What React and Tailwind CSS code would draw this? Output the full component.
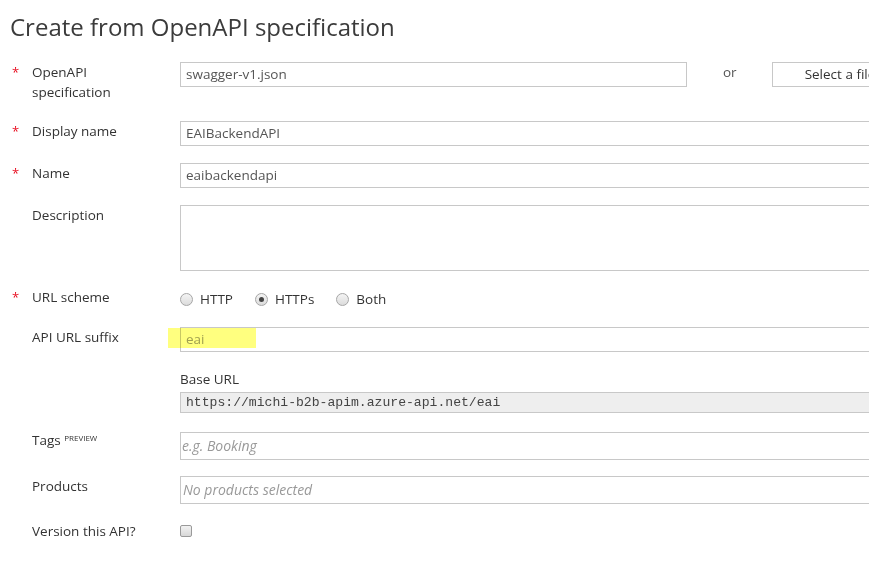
import React from 'react';

const sans = { fontFamily: '"Open Sans", "Liberation Sans", sans-serif' };

function Req({ on }) {
  return (
    <span className="w-[20px] shrink-0 text-[13px] leading-5 text-[#e81123]">
      {on ? '*' : ''}
    </span>
  );
}

function Label({ required, children }) {
  return (
    <div className="flex w-[180px] shrink-0 pl-[12px] text-[13.5px] leading-5 text-[#333]">
      <Req on={required} />
      <div className="w-[140px]">{children}</div>
    </div>
  );
}

function Radio({ checked, label }) {
  return (
    <label className="flex items-center gap-[7px] mr-[22px]">
      <span className="flex h-[13px] w-[13px] items-center justify-center rounded-full border border-[#a6a6a6] bg-gradient-to-b from-[#f4f4f4] to-[#dcdcdc]">
        {checked && <span className="h-[5px] w-[5px] rounded-full bg-[#444]" />}
      </span>
      <span>{label}</span>
    </label>
  );
}

export default function App() {
  return (
    <div className="w-[869px] h-[578px] overflow-hidden bg-white" style={sans}>
      <h1 className="pl-[10px] pt-[11px] text-[24px] leading-8 font-normal text-[#3b3b3b]">
        Create from OpenAPI specification
      </h1>

      <div className="w-[1000px]">
        {/* OpenAPI spec */}
        <div className="mt-[19px] flex">
          <Label required>OpenAPI<br />specification</Label>
          <div className="flex items-start">
            <div className="w-[507px] h-[25px] border border-[#c8c8c8] pl-[5px] text-[13.5px] leading-[23px] text-[#555]">
              swagger-v1.json
            </div>
            <span className="ml-[36px] w-[14px] text-[13.5px] leading-[19px] mt-[1px] text-[#555]">or</span>
            <button className="ml-[35px] w-[136px] h-[25px] border border-[#c8c8c8] text-[13.5px] text-[#333] bg-white">
              Select a file
            </button>
          </div>
        </div>

        {/* Display name */}
        <div className="mt-[19px] flex">
          <Label required>Display name</Label>
          <div className="w-[720px] h-[25px] border border-[#c8c8c8] pl-[5px] text-[13.5px] leading-[23px] text-[#555]">
            EAIBackendAPI
          </div>
        </div>

        {/* Name */}
        <div className="mt-[17px] flex">
          <Label required>Name</Label>
          <div className="w-[720px] h-[25px] border border-[#c8c8c8] pl-[5px] text-[13.5px] leading-[23px] text-[#555]">
            eaibackendapi
          </div>
        </div>

        {/* Description */}
        <div className="mt-[17px] flex">
          <Label>Description</Label>
          <div className="w-[720px] h-[66px] border border-[#c8c8c8]" />
        </div>

        {/* URL scheme */}
        <div className="mt-[16px] flex">
          <Label required>URL scheme</Label>
          <div className="flex h-5 mt-[2px] items-center text-[13.5px] text-[#333]">
            <Radio label="HTTP" />
            <Radio checked label="HTTPs" />
            <Radio label="Both" />
          </div>
        </div>

        {/* API URL suffix */}
        <div className="mt-[18px] flex">
          <Label>API URL suffix</Label>
          <div className="relative">
            <span className="absolute left-[-12px] top-[1px] h-[20px] w-[88px] bg-[#ffff00]/50 mix-blend-multiply" />
            <div className="w-[720px] h-[25px] border border-[#c8c8c8] pl-[5px] text-[13.5px] leading-[23px] text-[#a0a0a0]">
              eai
            </div>
          </div>
        </div>

        {/* Base URL */}
        <div className="flex">
          <div className="w-[180px] shrink-0" />
          <div>
            <div className="mt-[17px] text-[13.5px] leading-5 text-[#333]">Base URL</div>
            <div
              className="mt-[3px] w-[720px] h-[21px] border border-[#c8c8c8] bg-[#eeeeee] pl-[5px] text-[13.1px] leading-[19px] text-[#444]"
              style={{ fontFamily: '"Liberation Mono", "DejaVu Sans Mono", monospace' }}
            >
              https://michi-b2b-apim.azure-api.net/eai
            </div>
          </div>
        </div>

        {/* Tags */}
        <div className="mt-[19px] flex">
          <Label>
            <span className="relative top-[-2px]">
              Tags <sup className="text-[8px] uppercase text-[#333]">preview</sup>
            </span>
          </Label>
          <div className="w-[720px] h-[28px] border border-[#c8c8c8] pl-[1px] text-[14px] leading-[26px] italic text-[#999]">
            e.g. Booking
          </div>
        </div>

        {/* Products */}
        <div className="mt-[16px] flex">
          <Label>Products</Label>
          <div className="w-[720px] h-[28px] border border-[#c8c8c8] pl-[2px] text-[14px] leading-[26px] italic text-[#999]">
            No products selected
          </div>
        </div>

        {/* Version */}
        <div className="mt-[17px] flex">
          <Label>Version this API?</Label>
          <div className="flex h-5 items-center">
            <span className="h-[12px] w-[12px] rounded-[2px] border border-[#9a9a9a] bg-gradient-to-b from-[#f2f2f2] to-[#d8d8d8]" />
          </div>
        </div>
      </div>
    </div>
  );
}
